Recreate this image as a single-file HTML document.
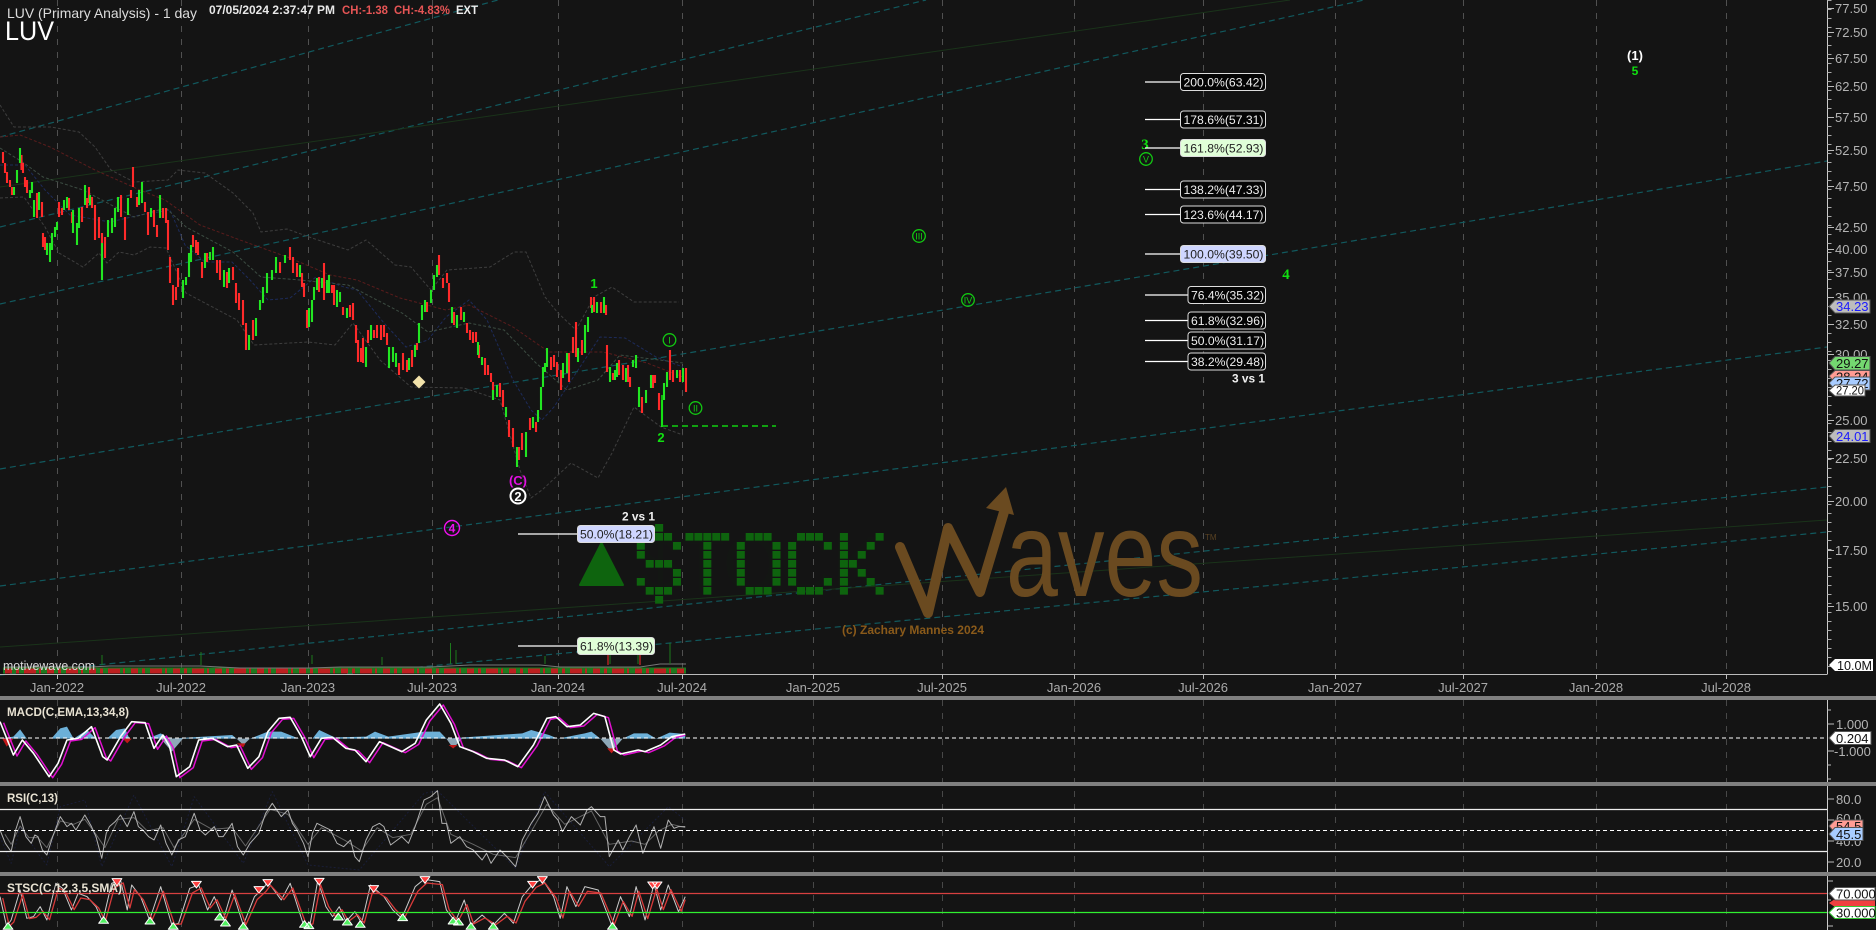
<!DOCTYPE html>
<html><head><meta charset="utf-8"><title>LUV</title>
<style>
html,body{margin:0;padding:0;background:#141414;overflow:hidden}
svg{display:block;position:absolute;left:0;top:0}
text{font-family:"Liberation Sans",sans-serif}
.ax{fill:#b4b4b4;font-size:13px}
.dt{fill:#aaa;font-size:13px;text-anchor:middle}
.fb{fill:#eee;font-size:12px}
.fd{fill:#222;font-size:12px}
.tt{fill:#e8e2d2;font-size:12px;font-weight:bold}
.tg{fill:#111;font-size:13px}
.g{fill:#10e010;font-weight:bold;font-size:15px;font-family:"Liberation Serif",serif;text-anchor:middle}
</style></head><body>
<svg width="1876" height="930" viewBox="0 0 1876 930" xmlns="http://www.w3.org/2000/svg">
<rect width="1876" height="930" fill="#141414"/>

<!-- grid -->
<path d="M57.5 0V674M181.5 0V674M308.5 0V674M432.5 0V674M558.5 0V674M682.5 0V674M813.5 0V674M942.5 0V674M1074.5 0V674M1203.5 0V674M1335.5 0V674M1463.5 0V674M1596.5 0V674M1726.5 0V674" stroke="#505050" stroke-dasharray="6 7" fill="none"/>
<path d="M57.5 700V930M181.5 700V930M308.5 700V930M432.5 700V930M558.5 700V930M682.5 700V930M813.5 700V930M942.5 700V930M1074.5 700V930M1203.5 700V930M1335.5 700V930M1463.5 700V930M1596.5 700V930M1726.5 700V930" stroke="#484848" stroke-dasharray="6 7" fill="none"/>

<!-- trend lines -->
<g stroke="#11595e" stroke-width="1.2" fill="none" stroke-dasharray="6 4">
<path d="M0 137L498 0"/><path d="M0 227L926 0"/><path d="M0 304L1364 0"/><path d="M0 469L1827 161"/><path d="M0 586L1827 347"/><path d="M0 675L1827 487"/><path d="M347 674L1827 532"/>
</g>
<path d="M0 187L1290 0M0 647L1827 520" stroke="#1a331a" fill="none"/>

<!-- moving averages / bands -->
<g fill="none" stroke-dasharray="3 2">
<path stroke="#3e3e3e" d="M0 105L14 127L51 127L79 132L95 147L111 170L134 182L168 180L178 170L205 173L233 193L253 213L261 232L287 229L312 238L348 250L366 240L395 265L411 267L431 290L447 270L490 267L514 252L526 252L545 297L558 313L576 330L594 297L612 287L634 302L679 302"/>
<path stroke="#3e3e3e" d="M0 198L24 197L45 227L59 253L83 267L99 253L107 263L119 252L134 255L150 247L166 248L186 293L237 320L254 345L308 342L335 345L353 323L380 360L411 387L464 388L500 400L520 470L531 498L542 490L571 463L598 478L612 453L634 407L661 427L683 435"/>
<path stroke="#5a1c1c" d="M0 137L20 135L50 147L95 170L140 190L165 200L200 225L240 240L290 258L330 275L357 280L400 298L446 310L469 305L513 327L549 352L603 352L647 363L683 377"/>
<path stroke="#1d2b5a" d="M0 165L25 165L45 190L70 215L110 222L140 215L170 210L185 245L205 262L232 262L250 280L268 300L290 298L316 277L344 287L357 290L384 323L406 347L428 340L446 317L469 300L487 320L513 380L531 410L542 420L554 407L576 373L600 337L625 338L656 357L683 367"/>
<path stroke="#3c4c42" d="M0 148L24 163L43 177L83 190L134 217L166 208L186 227L233 252L261 277L300 280L348 285L402 313L428 332L469 323L504 330L536 363L567 390L598 380L620 355L683 363"/>
</g>

<!-- candles -->
<path fill="none" stroke="#ff2a2a" stroke-width="2.1" d="M3 152V163M5 163V173M7 172V183M10 180V187M12 187V195M21.5 155V170M23 163V173M25 177V187M27 180V193M37 193V218M42 202V217M43 233V247M45 237V250M59 202V217M62 208V215M69 198V210M72 212V223M82 207V222M87 198V208M89 187V203M92 197V208M95 205V240M99 217V238M102 233V258M105 237V258M121 195V217M125 217V240M131 190V198M133 167V187M137 197V207M145 202V212M148 212V235M154 210V227M157 225V237M163 208V218M166 208V223M168 220V250M170 257V283M173 285V305M176 287V300M178 268V287M193 235V247M196 240V253M198 242V255M202 262V278M207 253V262M217 260V273M220 260V280M227 272V288M233 267V280M236 283V303M239 293V310M243 300V325M246 323V350M253 320V340M280 262V273M290 247V260M293 257V273M297 263V277M302 273V287M304 283V297M307 310V328M319 277V292M324 263V300M332 285V293M334 285V305M343 307V315M350 305V317M353 303V320M356 325V343M358 340V362M361 348V362M363 338V363M368 330V343M374 330V338M377 325V338M381 325V340M384 325V337M387 333V345M399 363V375M403 353V370M407 360V372M412 350V367M417 343V350M427 302V312M439 255V275M443 278V288M447 273V283M449 283V302M454 312V325M461 307V320M467 323V333M470 330V340M473 332V343M476 332V342M479 345V358M485 358V375M488 365V375M491 373V382M493 382V395M500 383V397M503 390V407M509 420V437M513 428V447M519 447V460M522 433V450M530 418V430M536 422V432M551 357V370M554 355V367M557 362V377M561 370V390M569 353V382M573 337V353M576 322V357M582 340V355M591 297V308M594 297V312M601 302V313M606 305V315M607 345V372M613 373V380M619 360V375M623 365V380M628 365V382M630 377V387M642 397V413M653 375V388M655 375V383M659 393V410M670 350V380M673 370V382M680 370V382M686 368V392"/>
<path fill="none" stroke="#22e622" stroke-width="2.1" d="M14 187V195M17 170V183M20 148V163M30 190V198M32 182V193M34 200V217M39 192V210M47 243V255M50 243V262M52 233V250M55 227V237M57 222V230M64 200V210M67 197V208M73 210V233M77 223V245M79 208V228M85 185V205M90 195V205M102 243V280M108 220V237M112 218V233M115 208V227M118 197V212M128 198V215M139 190V205M142 182V203M151 208V217M160 195V218M183 280V298M186 277V285M189 253V277M191 245V262M205 253V268M210 252V260M213 247V260M224 270V287M229 268V283M249 335V350M256 318V336M260 300V310M263 287V303M267 273V293M272 270V280M276 257V273M285 255V263M300 265V277M309 308V327M312 300V322M314 287V300M317 278V290M322 278V288M327 280V293M329 275V293M337 290V307M340 292V302M347 308V318M366 347V367M371 325V340M389 347V368M393 347V362M396 353V367M409 358V370M415 345V357M419 323V343M422 305V320M425 300V312M431 290V303M434 275V290M437 265V277M452 307V323M457 315V328M464 312V322M478 342V355M482 357V365M493 390V400M497 385V397M506 407V417M517 447V467M526 432V457M533 417V428M538 410V422M541 387V410M543 367V387M545 363V372M547 348V367M563 363V378M567 353V373M578 348V362M585 325V353M588 317V332M592 305V313M597 302V313M604 297V313M610 367V382M615 370V380M617 363V377M626 368V382M633 360V367M636 355V368M639 387V407M646 390V403M651 375V388M662 400V427M664 383V400M667 372V387M677 370V378M683 368V382"/>
<path d="M662 395V426" stroke="#10e010" stroke-width="1.5"/>
<path d="M662 426H776" stroke="#10d010" stroke-width="1.5" stroke-dasharray="6 4"/>

<!-- volume -->
<path d="M3 670.500H686" stroke="#1f7a1f" stroke-width="6" fill="none"/>
<path d="M5 671H686" stroke="#bd2020" stroke-width="5" stroke-dasharray="7 4 3 5 12 3 2 6" fill="none"/>
<path d="M5 667H90L110 666H200L240 668H310L340 667H430L470 665H540L560 667H640L660 664H686" stroke="#777" fill="none"/>
<path d="M102 665V655M201 665V652M312 664V655M382 665V657M450.500 664V643M456 664V650M545 664V656M610 664V654M638 664V650M670 664V643" stroke="#1d7a1d" fill="none"/>
<path d="M608 665V655M640 665V654" stroke="#b02222" stroke-width="1.500" fill="none"/>
<text x="3" y="670" style="font-size:13px;fill:#d8d8d8" textLength="92" lengthAdjust="spacingAndGlyphs">motivewave.com</text>

<!-- header -->
<text x="7" y="18" style="font-size:14px;fill:#dcdcdc" textLength="190" lengthAdjust="spacingAndGlyphs">LUV (Primary Analysis)  - 1 day</text>
<text x="209" y="14" style="font-size:12px;font-weight:bold;fill:#e8e8e8" textLength="126" lengthAdjust="spacingAndGlyphs">07/05/2024 2:37:47 PM</text>
<text x="342" y="14" style="font-size:12px;font-weight:bold;fill:#e65555" textLength="46" lengthAdjust="spacingAndGlyphs">CH:-1.38</text>
<text x="394" y="14" style="font-size:12px;font-weight:bold;fill:#e65555" textLength="56" lengthAdjust="spacingAndGlyphs">CH:-4.83%</text>
<text x="456" y="14" style="font-size:12px;font-weight:bold;fill:#eee" textLength="22" lengthAdjust="spacingAndGlyphs">EXT</text>
<text x="5" y="40" style="font-size:27px;fill:#fff" textLength="49" lengthAdjust="spacingAndGlyphs">LUV</text>

<!-- wave labels -->
<path d="M419 375.500L425.500 382L419 388.500L412.500 382Z" fill="#f2e2aa"/>
<text x="518" y="485" text-anchor="middle" style="font-size:13px;fill:#e010e0;font-weight:bold">(C)</text>
<circle cx="518" cy="496" r="7.500" fill="#141414" stroke="#fff" stroke-width="2"/>
<text x="518" y="501" text-anchor="middle" style="font-size:13px;fill:#fff;font-weight:bold">2</text>
<circle cx="452" cy="528" r="7.500" fill="none" stroke="#f010f0" stroke-width="1.400"/>
<text x="452" y="532.500" text-anchor="middle" style="font-size:12px;fill:#f010f0;font-weight:bold">4</text>
<text x="594" y="288" class="g" style="font-family:'Liberation Sans',sans-serif;font-size:13px">1</text>
<text x="661" y="442" class="g" style="font-family:'Liberation Sans',sans-serif;font-size:13px">2</text>
<g fill="none" stroke="#12c812" stroke-width="1.300"><circle cx="669.500" cy="340" r="6.300"/><circle cx="695.500" cy="408" r="6.300"/><circle cx="919" cy="236" r="6.300"/><circle cx="968" cy="300" r="6.300"/><circle cx="1146" cy="159" r="6.300"/></g>
<g text-anchor="middle" style="font-size:9px" fill="#12d012">
<text x="669.500" y="343.500">I</text><text x="695.500" y="411.500">II</text><text x="919" y="239.500">III</text><text x="968" y="303.500">IV</text><text x="1146" y="162.500">V</text></g>
<text x="1145" y="149" class="g">3</text>
<text x="1286" y="279" class="g">4</text>
<text x="1635" y="60" text-anchor="middle" style="font-size:13px;fill:#fff;font-weight:bold">(1)</text>
<text x="1635" y="75" class="g" style="font-family:'Liberation Sans',sans-serif;font-size:12px">5</text>

<!-- logo -->
<path d="M601.500 543L623 585H580Z" fill="#0e640e" stroke="#0e640e" stroke-width="2" stroke-linejoin="round"/>
<text x="640" y="590" style="font-size:76px;fill:#0e640e;opacity:.03" textLength="240" lengthAdjust="spacingAndGlyphs">$TOCK</text>
<g transform="translate(560,470) scale(.4464,.3333)" fill="#0e640e">
<rect x="213" y="162" width="18" height="23"/>
<rect x="213" y="189" width="18" height="23"/><rect x="233" y="189" width="18" height="23"/>
<rect x="281" y="189" width="18" height="23"/><rect x="301" y="189" width="18" height="23"/><rect x="321" y="189" width="18" height="23"/><rect x="341" y="189" width="18" height="23"/><rect x="361" y="189" width="18" height="23"/>
<rect x="416" y="189" width="18" height="23"/><rect x="436" y="189" width="18" height="23"/><rect x="456" y="189" width="18" height="23"/>
<rect x="531" y="189" width="18" height="23"/><rect x="551" y="189" width="18" height="23"/><rect x="571" y="189" width="18" height="23"/>
<rect x="627" y="189" width="18" height="23"/><rect x="707" y="189" width="18" height="23"/>
<rect x="172" y="216" width="18" height="23"/><rect x="253" y="216" width="18" height="23"/><rect x="321" y="216" width="18" height="23"/><rect x="396" y="216" width="18" height="23"/><rect x="476" y="216" width="18" height="23"/><rect x="511" y="216" width="18" height="23"/><rect x="591" y="216" width="18" height="23"/><rect x="627" y="216" width="18" height="23"/><rect x="687" y="216" width="18" height="23"/>
<rect x="172" y="243" width="18" height="23"/><rect x="321" y="243" width="18" height="23"/><rect x="396" y="243" width="18" height="23"/><rect x="476" y="243" width="18" height="23"/><rect x="511" y="243" width="18" height="23"/><rect x="627" y="243" width="18" height="23"/><rect x="667" y="243" width="18" height="23"/>
<rect x="192" y="270" width="18" height="23"/><rect x="213" y="270" width="18" height="23"/><rect x="233" y="270" width="18" height="23"/><rect x="321" y="270" width="18" height="23"/><rect x="396" y="270" width="18" height="23"/><rect x="476" y="270" width="18" height="23"/><rect x="511" y="270" width="18" height="23"/><rect x="627" y="270" width="18" height="23"/><rect x="647" y="270" width="18" height="23"/>
<rect x="253" y="297" width="18" height="23"/><rect x="321" y="297" width="18" height="23"/><rect x="396" y="297" width="18" height="23"/><rect x="476" y="297" width="18" height="23"/><rect x="511" y="297" width="18" height="23"/><rect x="627" y="297" width="18" height="23"/><rect x="667" y="297" width="18" height="23"/>
<rect x="172" y="324" width="18" height="23"/><rect x="253" y="324" width="18" height="23"/><rect x="321" y="324" width="18" height="23"/><rect x="396" y="324" width="18" height="23"/><rect x="476" y="324" width="18" height="23"/><rect x="511" y="324" width="18" height="23"/><rect x="591" y="324" width="18" height="23"/><rect x="627" y="324" width="18" height="23"/><rect x="687" y="324" width="18" height="23"/>
<rect x="192" y="351" width="18" height="23"/><rect x="213" y="351" width="18" height="23"/><rect x="233" y="351" width="18" height="23"/><rect x="321" y="351" width="18" height="23"/><rect x="416" y="351" width="18" height="23"/><rect x="436" y="351" width="18" height="23"/><rect x="456" y="351" width="18" height="23"/><rect x="531" y="351" width="18" height="23"/><rect x="551" y="351" width="18" height="23"/><rect x="571" y="351" width="18" height="23"/><rect x="627" y="351" width="18" height="23"/><rect x="707" y="351" width="18" height="23"/>
<rect x="213" y="378" width="18" height="23"/>
</g>
<path d="M900 547L928 613L948 528L980 592L1004 512" fill="none" stroke="#6a4a20" stroke-width="10" stroke-linecap="round" stroke-linejoin="round"/>
<path d="M1006 487L986 508L1014 515Z" fill="#6a4a20"/>
<text x="1006" y="596" style="font-size:121px;fill:#6a4a20" textLength="197" lengthAdjust="spacingAndGlyphs">aves</text>
<text x="1205" y="540" style="font-size:8px;fill:#5a4222">TM</text>
<text x="842" y="634" style="font-size:12px;font-weight:bold;fill:#8a5a1a" textLength="142" lengthAdjust="spacingAndGlyphs">(c) Zachary Mannes 2024</text>

<!-- fib levels -->
<path d="M1145 82H1180M1145 119.500H1180M1145 148H1180M1145 189.500H1180M1145 214.500H1180M1145 254H1180M1145 295H1188M1145 320.500H1188M1145 340.500H1188M1145 361.500H1188M518 534H577M518 646H577" stroke="#fff" stroke-width="1.200" fill="none"/>
<g stroke="#ddd" stroke-width="1">
<rect x="1180.500" y="73.500" width="85" height="17" rx="3" fill="#050505"/>
<rect x="1180.500" y="111" width="85" height="17" rx="3" fill="#050505"/>
<rect x="1180.500" y="139.500" width="85" height="17" rx="3" fill="#e0ffd8"/>
<rect x="1180.500" y="181" width="85" height="17" rx="3" fill="#050505"/>
<rect x="1180.500" y="206" width="85" height="17" rx="3" fill="#050505"/>
<rect x="1180.500" y="245.500" width="85" height="17" rx="3" fill="#cfd6ff"/>
<rect x="1188" y="286.500" width="77.500" height="17" rx="3" fill="#050505"/>
<rect x="1188" y="312" width="77.500" height="17" rx="3" fill="#050505"/>
<rect x="1188" y="332" width="77.500" height="17" rx="3" fill="#050505"/>
<rect x="1188" y="353" width="77.500" height="17" rx="3" fill="#050505"/>
<rect x="577.500" y="525.500" width="77" height="17" rx="3" fill="#cfd6ff"/>
<rect x="577.500" y="637.500" width="77" height="17" rx="3" fill="#e0ffd8"/>
</g>
<text class="fb" x="1183.500" y="86.500" textLength="80" lengthAdjust="spacingAndGlyphs">200.0%(63.42)</text>
<text class="fb" x="1183.500" y="124" textLength="80" lengthAdjust="spacingAndGlyphs">178.6%(57.31)</text>
<text class="fd" x="1183.500" y="152.500" textLength="80" lengthAdjust="spacingAndGlyphs">161.8%(52.93)</text>
<text class="fb" x="1183.500" y="194" textLength="80" lengthAdjust="spacingAndGlyphs">138.2%(47.33)</text>
<text class="fb" x="1183.500" y="219" textLength="80" lengthAdjust="spacingAndGlyphs">123.6%(44.17)</text>
<text class="fd" x="1183.500" y="258.500" textLength="80" lengthAdjust="spacingAndGlyphs">100.0%(39.50)</text>
<text class="fb" x="1191" y="299.500" textLength="73" lengthAdjust="spacingAndGlyphs">76.4%(35.32)</text>
<text class="fb" x="1191" y="325" textLength="73" lengthAdjust="spacingAndGlyphs">61.8%(32.96)</text>
<text class="fb" x="1191" y="345" textLength="73" lengthAdjust="spacingAndGlyphs">50.0%(31.17)</text>
<text class="fb" x="1191" y="366" textLength="73" lengthAdjust="spacingAndGlyphs">38.2%(29.48)</text>
<text class="fd" x="580" y="538.500" textLength="73" lengthAdjust="spacingAndGlyphs">50.0%(18.21)</text>
<text class="fd" x="580" y="650.500" textLength="73" lengthAdjust="spacingAndGlyphs">61.8%(13.39)</text>
<text x="1232" y="382.500" style="font-size:12px;font-weight:bold;fill:#f0f0f0" textLength="33" lengthAdjust="spacingAndGlyphs">3 vs 1</text>
<text x="622" y="520.500" style="font-size:12px;font-weight:bold;fill:#f0f0f0" textLength="33" lengthAdjust="spacingAndGlyphs">2 vs 1</text>

<!-- axis lines -->
<path d="M0 674.500H1827" stroke="#bbb"/>
<path d="M1827.500 0V674.500M1827.500 700V930" stroke="#ccc"/>
<path d="M57.500 674V679M181.500 674V679M308.500 674V679M432.500 674V679M558.500 674V679M682.500 674V679M813.500 674V679M942.500 674V679M1074.500 674V679M1203.500 674V679M1335.500 674V679M1463.500 674V679M1596.500 674V679M1726.500 674V679" stroke="#bbb"/>
<path d="M1829.500 0V674" stroke="#aaa" stroke-width="4" stroke-dasharray="1 8" fill="none"/>
<path d="M1827 8.500H1834M1827 32.500H1834M1827 58.500H1834M1827 86.500H1834M1827 117.500H1834M1827 150.500H1834M1827 186.500H1834M1827 227.500H1834M1827 249.500H1834M1827 272.500H1834M1827 297.500H1834M1827 324.500H1834M1827 354.500H1834M1827 420.500H1834M1827 458.500H1834M1827 501.500H1834M1827 550.500H1834M1827 606.500H1834" stroke="#bbb"/>
<text class="ax" x="1835" y="13">77.50</text><text class="ax" x="1835" y="37">72.50</text><text class="ax" x="1835" y="63">67.50</text><text class="ax" x="1835" y="91">62.50</text><text class="ax" x="1835" y="122">57.50</text><text class="ax" x="1835" y="155">52.50</text><text class="ax" x="1835" y="191">47.50</text><text class="ax" x="1835" y="232">42.50</text><text class="ax" x="1835" y="254">40.00</text><text class="ax" x="1835" y="277">37.50</text><text class="ax" x="1835" y="302">35.00</text><text class="ax" x="1835" y="329">32.50</text><text class="ax" x="1835" y="359">30.00</text><text class="ax" x="1835" y="425">25.00</text><text class="ax" x="1835" y="463">22.50</text><text class="ax" x="1835" y="506">20.00</text><text class="ax" x="1835" y="555">17.50</text><text class="ax" x="1835" y="611">15.00</text>

<!-- date labels -->
<text class="dt" x="57" y="692">Jan-2022</text><text class="dt" x="181" y="692">Jul-2022</text><text class="dt" x="308" y="692">Jan-2023</text><text class="dt" x="432" y="692">Jul-2023</text><text class="dt" x="558" y="692">Jan-2024</text><text class="dt" x="682" y="692">Jul-2024</text><text class="dt" x="813" y="692">Jan-2025</text><text class="dt" x="942" y="692">Jul-2025</text><text class="dt" x="1074" y="692">Jan-2026</text><text class="dt" x="1203" y="692">Jul-2026</text><text class="dt" x="1335" y="692">Jan-2027</text><text class="dt" x="1463" y="692">Jul-2027</text><text class="dt" x="1596" y="692">Jan-2028</text><text class="dt" x="1726" y="692">Jul-2028</text>

<!-- panel separators -->
<rect x="0" y="696" width="1876" height="4" fill="#808080"/>
<rect x="0" y="782" width="1876" height="4" fill="#808080"/>
<rect x="0" y="872" width="1876" height="4" fill="#808080"/>

<!-- MACD / RSI / STOCH, drawn in stretched coordinates -->
<g transform="translate(0,680) scale(.4464,.3333)" fill="none" stroke-linejoin="round">
<path fill="#6cb0d8" d="M0 176L30 170L45 148L60 176L115 176L135 145L150 140L165 176L195 150L215 176L240 176L260 150L280 145L290 176L330 176L360 160L380 176L520 165L530 176L560 176L600 155L630 155L670 176L700 176L715 150L750 172L820 170L840 155L870 170L950 155L985 155L1000 176L1170 160L1190 150L1230 165L1250 176L1310 160L1325 155L1345 176L1395 176L1420 160L1450 160L1470 176L1500 158L1535 162L1535 176Z"/>
<path fill="#8ea8b8" d="M360 176L385 215L410 176ZM530 176L545 195L560 176ZM1000 176L1015 205L1035 176ZM1345 176L1370 215L1395 176Z"/>
<path fill="#c01818" d="M5 176L15 200L30 176ZM275 176L285 190L295 176ZM530 190L545 202L550 190ZM1005 195L1015 205L1025 195ZM1360 205L1370 220L1380 205Z"/>
<path vector-effect="non-scaling-stroke" stroke="#e010d0" stroke-width="1.500" transform="translate(8,3)" d="M0 125L15 175L30 225L50 180L75 220L110 290L130 250L150 180L175 175L205 140L230 230L240 240L270 170L295 125L325 128L345 205L365 165L380 200L395 290L425 260L445 180L475 175L510 200L530 195L555 265L580 230L600 155L625 115L650 112L675 170L695 230L720 175L745 172L775 205L795 210L820 245L850 185L900 215L930 190L955 120L985 72L1010 130L1030 200L1060 215L1090 235L1130 240L1160 260L1195 195L1225 115L1245 110L1270 140L1300 135L1330 100L1355 110L1375 210L1390 222L1430 210L1445 215L1480 195L1505 170L1527 162"/>
<path vector-effect="non-scaling-stroke" stroke="#fff" stroke-width="1.600" d="M0 125L15 175L30 225L50 180L75 220L110 290L130 250L150 180L175 175L205 140L230 230L240 240L270 170L295 125L325 128L345 205L365 165L380 200L395 290L425 260L445 180L475 175L510 200L530 195L555 265L580 230L600 155L625 115L650 112L675 170L695 230L720 175L745 172L775 205L795 210L820 245L850 185L900 215L930 190L955 120L985 72L1010 130L1030 200L1060 215L1090 235L1130 240L1160 260L1195 195L1225 115L1245 110L1270 140L1300 135L1330 100L1355 110L1375 210L1390 222L1430 210L1445 215L1480 195L1505 170L1535 162"/>
<path vector-effect="non-scaling-stroke" stroke="#1a1e38" stroke-dasharray="2 2" d="M0 470L25 550L45 440L85 520L105 555L135 380L190 360L228 560L300 345L385 560L435 350L545 550L610 335L690 555L805 570L950 340L980 332L1155 565L1220 335L1365 560L1497 380L1535 420"/>
<path vector-effect="non-scaling-stroke" stroke="#9c9c9c" transform="translate(5,-7)" opacity=".6" d="M6 470L20 500L40 445L60 480L80 480L100 510L130 430L160 440L185 425L210 470L230 510L260 425L295 420L325 460L360 450L385 510L430 425L470 455L515 450L545 505L600 395L640 410L685 500L715 450L770 490L805 520L840 450L875 480L915 470L950 380L975 360L1005 470L1055 500L1100 530L1150 540L1190 450L1220 380L1260 440L1320 400L1360 500L1410 490L1440 500L1470 460L1500 440L1530 450"/>
<path vector-effect="non-scaling-stroke" stroke="#b0b0b0" d="M0 450L12 490L25 515L35 450L45 410L58 470L70 490L78 465L85 470L95 510L105 525L118 470L135 410L150 440L160 430L170 450L190 405L205 440L215 470L228 535L238 460L245 440L258 425L270 405L285 440L300 395L310 440L320 450L333 470L345 480L360 435L372 490L385 525L400 480L415 470L435 400L448 450L460 465L480 440L490 470L500 470L520 430L532 500L545 525L560 490L580 460L595 400L610 370L630 410L645 390L655 430L665 450L680 490L690 530L700 460L710 430L725 440L740 450L755 490L770 500L785 480L795 530L805 545L820 480L835 440L850 430L860 440L875 495L890 480L900 470L915 490L930 440L940 400L950 360L965 350L980 332L990 430L1000 430L1010 490L1030 470L1045 500L1060 510L1080 540L1090 520L1100 550L1120 510L1135 530L1155 560L1170 480L1190 430L1205 400L1220 350L1240 405L1250 420L1260 455L1280 410L1300 435L1315 390L1325 380L1345 410L1355 410L1365 530L1385 480L1395 510L1410 470L1425 435L1440 520L1465 440L1480 505L1497 420L1510 445L1520 440L1535 440"/>
<path vector-effect="non-scaling-stroke" stroke="#ccc" d="M0 650L15 740L25 720L45 630L60 715L75 710L90 680L105 720L125 610L140 625L160 690L175 640L195 650L215 680L230 725L250 610L270 600L285 690L295 615L315 650L335 720L345 680L360 620L385 735L400 730L425 625L445 615L465 690L480 650L500 720L520 630L545 735L570 650L590 625L600 605L630 660L650 610L680 735L695 730L712 600L730 680L745 710L760 680L775 725L795 695L810 730L830 615L860 650L880 690L900 715L930 620L950 598L985 605L1000 690L1020 725L1040 660L1055 735L1080 705L1105 735L1130 700L1150 730L1170 650L1195 610L1215 598L1240 650L1255 715L1270 620L1290 680L1310 620L1340 630L1370 735L1390 650L1410 710L1425 620L1445 720L1465 612L1480 690L1497 615L1520 695L1535 650"/>
<path vector-effect="non-scaling-stroke" stroke="#d83a3a" stroke-width="1.300" transform="translate(6,4)" d="M0 650L15 735L25 722L45 640L60 712L75 708L90 690L105 715L125 620L140 630L160 685L175 650L195 655L215 680L230 720L250 620L270 605L285 680L295 625L315 655L335 715L345 685L360 630L385 730L400 728L425 635L445 620L465 680L480 655L500 712L520 640L545 730L570 655L590 630L600 612L630 655L650 620L680 730L695 728L712 610L730 675L745 705L760 685L775 720L795 700L810 725L830 625L860 650L880 685L900 710L930 630L950 605L985 610L1000 685L1020 720L1040 670L1055 728L1080 710L1105 730L1130 705L1150 725L1170 660L1195 618L1215 605L1240 650L1255 710L1270 630L1290 675L1310 630L1340 635L1370 730L1390 660L1410 705L1425 630L1445 712L1465 622L1480 685L1497 625L1520 690L1529 655"/>
<path fill="#ff4040" stroke="#fff" stroke-width="1" vector-effect="non-scaling-stroke" d="M251 596h22l-11 22zM429 604h22l-11 20zM569 620h22l-11 20zM589 599h22l-11 20zM704 595h22l-11 20zM826 617h22l-11 20zM941 590h22l-11 20zM1182 604h22l-11 20zM1204 590h22l-11 20zM1451 606h22l-11 20zM1461 606h22l-11 20z"/>
<path fill="#50f060" stroke="#fff" stroke-width="1" vector-effect="non-scaling-stroke" d="M7 748l11 -20l11 20zM221 730l11 -20l11 20zM325 732l11 -20l11 20zM377 748l11 -20l11 20zM481 720l11 -20l11 20zM494 738l11 -20l11 20zM534 748l11 -20l11 20zM671 742l11 -20l11 20zM681 746l11 -20l11 20zM747 720l11 -20l11 20zM767 735l11 -20l11 20zM796 742l11 -20l11 20zM891 722l11 -20l11 20zM1004 732l11 -20l11 20zM1016 735l11 -20l11 20zM1044 748l11 -20l11 20zM1094 748l11 -20l11 20zM1361 748l11 -20l11 20z"/>
</g>

<!-- panel level lines -->
<path d="M0 738H1827" stroke="#fff" stroke-dasharray="4 3"/>
<path d="M0 809.500H1827M0 851.500H1827" stroke="#eee" stroke-width="1.200"/>
<path d="M0 830.500H1827" stroke="#fff" stroke-dasharray="4 3"/>
<path d="M0 893.500H1827" stroke="#d84040" stroke-width="1.200"/>
<path d="M0 912.500H1827" stroke="#30f030" stroke-width="1.200"/>

<!-- panel titles -->
<text class="tt" x="7" y="716" textLength="122" lengthAdjust="spacingAndGlyphs">MACD(C,EMA,13,34,8)</text>
<text class="tt" x="7" y="802" textLength="51" lengthAdjust="spacingAndGlyphs">RSI(C,13)</text>
<text class="tt" x="7" y="892" textLength="115" lengthAdjust="spacingAndGlyphs">STSC(C,12,3,5,SMA)</text>

<!-- lower axis -->
<path d="M1827 710H1831M1827 724H1834M1827 751H1834M1827 765H1831M1827 779H1831M1827 799H1834M1827 820H1834M1827 841H1834M1827 862H1834M1827 881H1833M1827 900H1831M1827 926H1833" stroke="#bbb"/>
<text class="ax" x="1836" y="729">1.000</text>
<text class="ax" x="1834" y="756">-1.000</text>
<text class="ax" x="1836" y="804">80.0</text>
<text class="ax" x="1836" y="823">60.0</text>
<text class="ax" x="1836" y="846">40.0</text>
<text class="ax" x="1836" y="867">20.0</text>

<!-- price tags -->
<g stroke="#555" stroke-width="1">
<path d="M1829 306.500L1835 300H1870V313H1835Z" fill="#bdbdbd"/>
<path d="M1829 436L1835 429.500H1870V442.500H1835Z" fill="#bdbdbd"/>
<path d="M1829 376L1835 370.500H1870V383H1835Z" fill="#ff9c94"/>
</g>
<text class="tg" x="1836" y="311" style="fill:#1a1aff">34.23</text>
<text class="tg" x="1836" y="441" style="fill:#1a1aff">24.01</text>
<text class="tg" x="1836" y="381.500">28.24</text>
<path d="M1829 383L1835 377H1870V390H1835Z" fill="#a8ccff" stroke="#555"/>
<text class="tg" x="1836" y="388">27.72</text>
<path d="M1829 363L1835 356.500H1870V370H1835Z" fill="#74d870" stroke="#555"/>
<text class="tg" x="1836" y="368">29.27</text>
<path d="M1829 390.500L1835 385H1865V396H1835Z" fill="#fff" stroke="#555"/>
<text class="tg" x="1836" y="394.500" textLength="28" lengthAdjust="spacingAndGlyphs" style="font-size:11.500px">27.20</text>
<path d="M1829 665L1835 659H1873V671H1835Z" fill="#fff"/>
<text class="tg" x="1837" y="670" textLength="35" lengthAdjust="spacingAndGlyphs">10.0M</text>

<path d="M1829 738L1835 731.500H1871V744.500H1835Z" fill="#fff" stroke="#555"/>
<text class="tg" x="1836" y="743">0.204</text>
<path d="M1829 826L1835 820H1863V833H1835Z" fill="#ff9c94" stroke="#555"/>
<text class="tg" x="1836" y="831">54.5</text>
<path d="M1829 834L1835 827.500H1863V840.500H1835Z" fill="#a8ccff" stroke="#555"/>
<text class="tg" x="1836" y="839">45.5</text>
<path d="M1829 903L1835 899H1875V907H1835Z" fill="#f04040"/>
<path d="M1829 893.500L1835 887.500H1875V900H1835Z" fill="#fff" stroke="#555"/>
<text class="tg" x="1836" y="898.500">70.000</text>
<path d="M1829 912.500L1835 906.500H1875V918.500H1835Z" fill="#fff" stroke="#3c3"/>
<text class="tg" x="1836" y="917.500">30.000</text>
</svg>
</body></html>
